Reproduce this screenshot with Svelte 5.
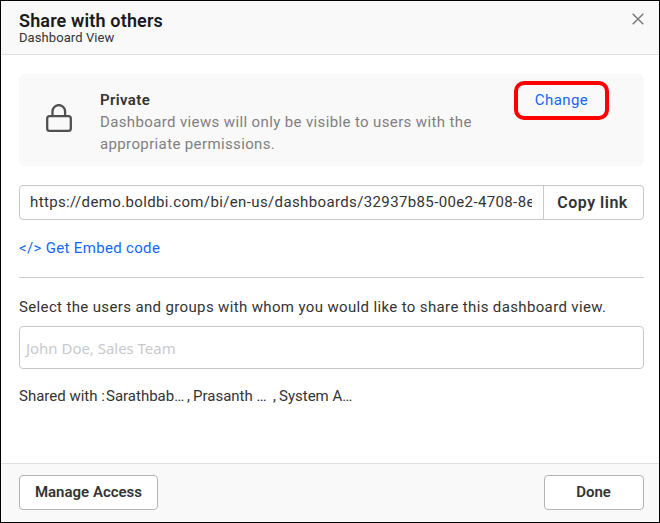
<script>
  const link = 'https://demo.boldbi.com/bi/en-us/dashboards/32937b85-00e2-4708-8e';
</script>

<div class="dialog">
  <header>
    <div>
      <h1>Share with others</h1>
      <p class="subtitle">Dashboard View</p>
    </div>
    <svg class="close" width="12" height="12" viewBox="0 0 12 12" aria-label="Close">
      <path d="M.7 .7 11.3 11.3M11.3 .7 .7 11.3" fill="none" stroke="#777" stroke-width="1.4" />
    </svg>
  </header>

  <main>
    <section class="access">
      <svg class="lock" width="26" height="29" viewBox="0 0 26 29">
        <rect x="1.2" y="12.2" width="23.6" height="14.6" rx="2.4" />
        <path d="M6.5 12V7.4a6.3 6.3 0 0 1 12.6 0V12" />
      </svg>
      <div class="detail">
        <h2>Private</h2>
        <p>Dashboard views will only be visible to users with the<br />appropriate permissions.</p>
      </div>
      <a class="change">Change</a>
    </section>

    <div class="linkbox">
      <div class="url"><span>{link}</span></div>
      <div class="copy"><span>Copy link</span></div>
    </div>

    <a class="embed">&lt;/&gt; Get Embed code</a>
    <hr />
    <p class="label">Select the users and groups with whom you would like to share this dashboard view.</p>
    <div class="people"><span>John Doe, Sales Team</span></div>
    <div class="shared">
      <span class="lead">Shared with :</span><span class="first">Sarathbab…</span><span class="comma">,</span><span class="second">Prasanth …</span><span class="comma">,</span><span>System A…</span>
    </div>
  </main>

  <footer>
    <div class="button manage"><span>Manage Access</span></div>
    <div class="button done"><span>Done</span></div>
  </footer>
</div>

<style>
  .dialog {
    box-sizing: border-box;
    width: 660px;
    height: 523px;
    border: 1px solid #000;
    background: #fff;
    display: flex;
    flex-direction: column;
    font-family: Roboto, sans-serif;
    font-size: 15px;
    color: #333;
    white-space: nowrap;
    overflow: hidden;
  }
  h1, h2, p { margin: 0; }
  header {
    box-sizing: border-box;
    height: 54px;
    flex: none;
    background: #f9f9f9;
    border-bottom: 1px solid #e0e0e0;
    display: flex;
    justify-content: space-between;
    padding: 9px 15px 0 18px;
  }
  h1 { font-size: 18px; line-height: 21px; font-weight: 600; color: #1a1a1a; letter-spacing: .15px; }
  .subtitle { font-size: 13px; line-height: 15px; letter-spacing: .08px; margin-top: -1px; }
  .close { margin-top: 3px; }
  main { flex: 1; padding: 19px 15px 0 18px; }
  .access {
    box-sizing: border-box;
    height: 92px;
    background: #f9f9f9;
    border-radius: 6px;
    display: flex;
    align-items: flex-start;
    padding-left: 27px;
  }
  .lock { margin-top: 30px; fill: none; stroke: #505050; stroke-width: 2.3; }
  .detail { margin: 15px 0 0 28px; width: 414px; line-height: 22px; letter-spacing: .37px; }
  .detail h2 { font-size: 15px; font-weight: 600; line-height: 22px; }
  .detail p { color: #808080; }
  .change {
    box-sizing: border-box;
    width: 95px;
    height: 39px;
    margin-top: 7px;
    border: 4px solid #f00;
    border-radius: 10px;
    text-align: center;
    line-height: 30px;
    color: #1267f5;
    letter-spacing: .45px;
  }
  .linkbox {
    box-sizing: border-box;
    display: flex;
    height: 35px;
    margin-top: 19px;
    border: 1px solid #c8c8c8;
    border-radius: 4px;
    line-height: 33px;
  }
  .url { width: 502px; margin: 0 11px 0 10px; overflow: hidden; letter-spacing: .37px; }
  .copy { flex: 1; padding-right: 2px; border-left: 1px solid #c8c8c8; text-align: center; font-size: 16px; font-weight: 600; letter-spacing: .5px; }
  .embed { display: block; margin-top: 17px; line-height: 22px; color: #1267f5; letter-spacing: .33px; }
  hr { margin: 18px 0 0; border: 0; height: 1px; background: #ccc; }
  .label { margin-top: 18px; line-height: 22px; letter-spacing: .36px; }
  .people {
    box-sizing: border-box;
    height: 43px;
    margin-top: 8px;
    border: 1px solid #c8c8c8;
    border-radius: 4px;
    padding-left: 6px;
    line-height: 42px;
    font-family: "Noto Sans", sans-serif;
    font-size: 15px;
    letter-spacing: -.03px;
    color: #c8cacd;
  }
  .shared { display: flex; margin-top: 16px; line-height: 22px; }
  .lead { width: 87px; }
  .first { width: 81px; }
  .comma { width: 6px; }
  .second { width: 80px; }
  footer {
    box-sizing: border-box;
    height: 59px;
    flex: none;
    border-top: 1px solid #e0e0e0;
    background: #f9f9f9;
    display: flex;
    justify-content: space-between;
    padding: 11px 15px 0 18px;
  }
  .button {
    box-sizing: border-box;
    height: 35px;
    border: 1px solid #b4b4b4;
    border-radius: 4px;
    background: #fff;
    text-align: center;
    line-height: 32px;
    font-weight: 600;
  }
  .manage { width: 139px; }
  .done { width: 100px; padding-right: 1px; }
</style>
